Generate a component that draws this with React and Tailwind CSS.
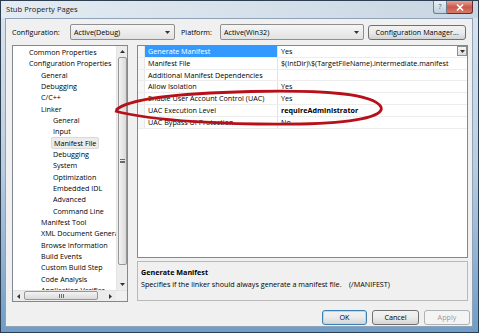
import * as React from "react";

const tree = [
  ["Common Properties", 0],
  ["Configuration Properties", 0],
  ["General", 1],
  ["Debugging", 1],
  ["C/C++", 1],
  ["Linker", 1],
  ["General", 2],
  ["Input", 2],
  ["Manifest File", 2, true],
  ["Debugging", 2],
  ["System", 2],
  ["Optimization", 2],
  ["Embedded IDL", 2],
  ["Advanced", 2],
  ["Command Line", 2],
  ["Manifest Tool", 1],
  ["XML Document Generator", 1],
  ["Browse Information", 1],
  ["Build Events", 1],
  ["Custom Build Step", 1],
  ["Code Analysis", 1],
  ["Application Verifier", 1],
];

const indent = ["pl-[16px]", "pl-[28px]", "pl-[40px]"];

const props = [
  ["Generate Manifest", "Yes"],
  ["Manifest File", "$(IntDir)\\$(TargetFileName).intermediate.manifest"],
  ["Additional Manifest Dependencies", ""],
  ["Allow Isolation", "Yes"],
  ["Enable User Account Control (UAC)", "Yes"],
  ["UAC Execution Level", "requireAdministrator", true],
  ["UAC Bypass UI Protection", "No"],
];

function Arrow({ dir = "down", className = "" }) {
  const pts = {
    down: "1,2 6,2 3.5,5",
    up: "1,5 6,5 3.5,2",
    left: "5,1 5,6 2,3.5",
    right: "2,1 2,6 5,3.5",
  }[dir];
  return (
    <svg width="7" height="7" viewBox="0 0 7 7" className={className}>
      <polygon points={pts} fill="#333" />
    </svg>
  );
}

function Combo({ text, width }) {
  return (
    <div
      className={`${width} h-[16px] flex items-center justify-between rounded-[2px] border border-[#8e8f8f] bg-gradient-to-b from-[#f6f6f6] to-[#e2e2e2] pl-[3px] pr-[3px]`}
    >
      <span>{text}</span>
      <Arrow />
    </div>
  );
}

function Button({ children, width, primary, disabled }) {
  return (
    <div
      className={`${width} h-[15px] flex items-center justify-center rounded-[3px] border ${
        primary ? "border-[#3c7fb1] shadow-[inset_0_0_0_1px_#a7e0f8]" : "border-[#707070]"
      } ${
        disabled
          ? "border-[#adb2b5] bg-[#f4f4f4] text-[#9a9a9a]"
          : "bg-gradient-to-b from-[#f2f2f2] via-[#ebebeb] to-[#d4d4d4]"
      }`}
    >
      {children}
    </div>
  );
}

export default function App() {
  return (
    <div className="relative w-[479px] h-[333px] overflow-hidden bg-gradient-to-b from-[#dbe5ef] via-[#b9cde0] to-[#6f9cc8] font-['Open_Sans',sans-serif] text-[7.2px] text-black border border-[#2d3e51]">
      {/* Title bar */}
      <div className="h-[17px] flex items-start bg-gradient-to-r from-[#e4ebf2] via-[#d6e1eb] to-[#c8d6e3]">
        <span className="ml-[5px] mt-[3px] text-[7.6px] text-[#1a1a1a]">Stub Property Pages</span>
        <div className="flex-1" />
        <div className="w-[14px] h-[13px] flex items-center justify-center rounded-bl-[3px] border border-t-0 border-[#6d7d8c] bg-gradient-to-b from-[#e9eef3] to-[#c1cfdb] text-[7px] text-[#4b5a67]">
          ?
        </div>
        <div className="w-[26px] h-[13px] mr-[5px] flex items-center justify-center rounded-br-[3px] border border-t-0 border-l-0 border-[#6d2a2a] bg-gradient-to-b from-[#e3a49a] via-[#c9584a] to-[#d87a66]">
          <svg width="8" height="7" viewBox="0 0 8 7">
            <path d="M1 0.5 L7 6.5 M7 0.5 L1 6.5" stroke="#fff" strokeWidth="1.6" />
          </svg>
        </div>
      </div>

      {/* Dialog body */}
      <div className="ml-[4px] w-[468px] h-[309px] bg-[#f0f0f0] border border-[#8ea3b8] flex flex-col">
        {/* Configuration row */}
        <div className="mt-[5px] h-[16px] flex items-center pl-[6px]">
          <span className="w-[58px]">Configuration:</span>
          <Combo text="Active(Debug)" width="w-[105px]" />
          <span className="ml-[6px] w-[39px]">Platform:</span>
          <Combo text="Active(Win32)" width="w-[144px]" />
          <div className="ml-[4px]">
            <Button width="w-[98px]">Configuration Manager...</Button>
          </div>
        </div>

        {/* Main area */}
        <div className="mt-[5px] flex pl-[6px]">
          {/* Tree */}
          <div className="w-[116px] h-[257px] border border-[#828790] bg-white flex flex-col">
            <div className="flex flex-1 min-h-0">
              <div className="flex-1 overflow-hidden pt-[1px]">
                {tree.map(([label, lvl, sel], i) => (
                  <div key={i} className={`h-[11.33px] leading-[11.33px] whitespace-nowrap ${indent[lvl]}`}>
                    <span className={sel ? "px-[2px] -mx-[2px] bg-[#ececec] border border-[#dadada] rounded-[2px]" : ""}>
                      {label}
                    </span>
                  </div>
                ))}
              </div>
              {/* vertical scrollbar */}
              <div className="w-[11px] bg-[#ececec] border-l border-[#e3e3e3] flex flex-col items-center">
                <div className="h-[11px] flex items-center justify-center">
                  <Arrow dir="up" />
                </div>
                <div className="w-[9px] h-[208px] rounded-[2px] border border-[#979797] bg-gradient-to-r from-[#f3f3f3] to-[#d9d9d9] flex items-center justify-center">
                  <div className="w-[5px] h-[4px] border-y border-[#6a6a6a] flex items-center">
                    <div className="w-full h-[1px] bg-[#6a6a6a]" />
                  </div>
                </div>
                <div className="flex-1" />
                <div className="h-[11px] flex items-center justify-center">
                  <Arrow dir="down" />
                </div>
              </div>
            </div>
            {/* horizontal scrollbar */}
            <div className="h-[11px] flex bg-[#ececec] border-t border-[#e3e3e3]">
              <div className="w-[11px] flex items-center justify-center">
                <Arrow dir="left" />
              </div>
              <div className="w-[74px] h-[9px] rounded-[2px] border border-[#979797] bg-gradient-to-b from-[#f3f3f3] to-[#d9d9d9] flex items-center justify-center">
                <div className="w-[5px] h-[4px] border-x border-[#6a6a6a] flex justify-center">
                  <div className="w-[1px] h-full bg-[#6a6a6a]" />
                </div>
              </div>
              <div className="flex-1" />
              <div className="w-[11px] flex items-center justify-center">
                <Arrow dir="right" />
              </div>
              <div className="w-[11px] bg-[#f0f0f0]" />
            </div>
          </div>

          {/* Property grid + description */}
          <div className="ml-[9px] w-[331px] flex flex-col">
            <div className="h-[213px] border border-[#828790] bg-white flex flex-col">
              {props.map(([name, value, bold], i) => (
                <div key={i} className="h-[11.8px] flex border-b border-[#ededed]">
                  <div className="w-[7px] bg-[#f7f7f7] border-r border-[#e6e6e6]" />
                  <div
                    className={`w-[133px] pl-[3px] leading-[11px] whitespace-nowrap overflow-hidden border-r border-[#e3e3e3] ${
                      i === 0 ? "bg-[#3399ff] text-white" : ""
                    }`}
                  >
                    {name}
                  </div>
                  <div className={`flex-1 flex items-center justify-between pl-[3px] whitespace-nowrap ${bold ? "font-bold" : ""}`}>
                    <span className="leading-[11px]">{value}</span>
                    {i === 0 && (
                      <div className="w-[10px] h-[10px] border border-[#8e8f8f] bg-gradient-to-b from-[#f6f6f6] to-[#dcdcdc] flex items-center justify-center">
                        <Arrow />
                      </div>
                    )}
                  </div>
                </div>
              ))}
            </div>
            <div className="mt-[3px] h-[40px] border border-[#b9b9b9] bg-[#f0f0f0] pl-[3px] pt-[4px] leading-[12px]">
              <div className="font-bold">Generate Manifest</div>
              <div className="whitespace-pre">
                {"Specifies if the linker should always generate a manifest file.    (/MANIFEST)"}
              </div>
            </div>
          </div>
        </div>

        {/* Buttons */}
        <div className="mt-[8px] flex justify-end pr-[2px] gap-[5px]">
          <Button width="w-[45px]" primary>
            OK
          </Button>
          <Button width="w-[47px]">Cancel</Button>
          <Button width="w-[46px]" disabled>
            Apply
          </Button>
        </div>
      </div>

      {/* Red annotation ellipse drawn over the dialog */}
      <svg className="absolute left-0 top-0 pointer-events-none" width="479" height="333" viewBox="0 0 479 333">
        <path
          d="M115,109 C128,97 185,92 250,90.5 C320,89 372,92 380,106 C384,116 350,122 300,123 C230,124 150,120 114,110"
          fill="none"
          stroke="#b8101a"
          strokeWidth="2.8"
        />
      </svg>
    </div>
  );
}
